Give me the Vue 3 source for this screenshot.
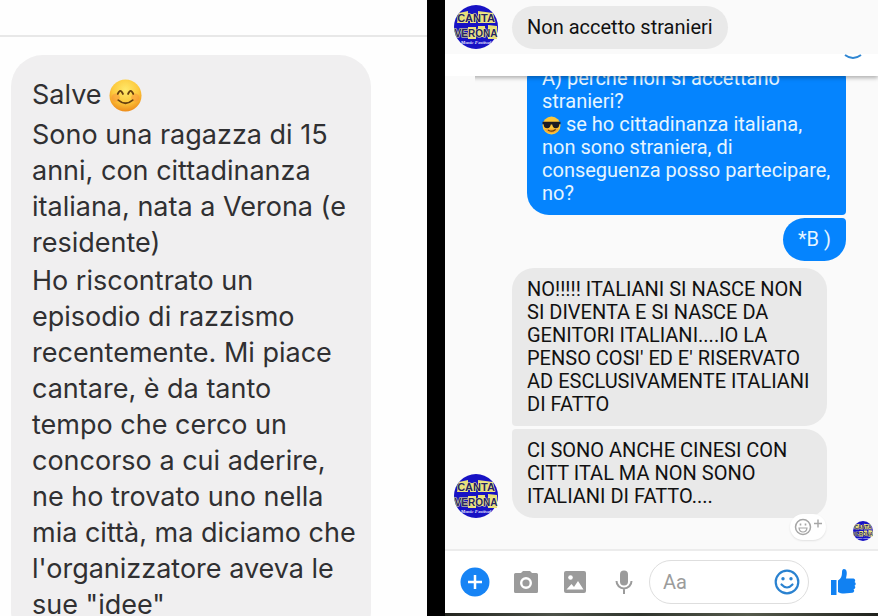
<script setup>
import { h } from 'vue'

const opening = 'Salve'
const story = [
  'Sono una ragazza di 15\nanni, con cittadinanza\nitaliana, nata a Verona (e\nresidente)',
  'Ho riscontrato un\nepisodio di razzismo\nrecentemente. Mi piace\ncantare, è da tanto\ntempo che cerco un\nconcorso a cui aderire,\nne ho trovato uno nella\nmia città, ma diciamo che\nl\'organizzatore aveva le\nsue "idee"',
]
const question = 'A) perché non si accettano\nstranieri?'
const argument = ' se ho cittadinanza italiana,\nnon sono straniera, di\nconseguenza posso partecipare,\nno?'
const replies = [
  "NO!!!!! ITALIANI SI NASCE NON\nSI DIVENTA E SI NASCE DA\nGENITORI ITALIANI....IO LA\nPENSO COSI' ED E' RISERVATO\nAD ESCLUSIVAMENTE ITALIANI\nDI FATTO",
  'CI SONO ANCHE CINESI CON\nCITT ITAL MA NON SONO\nITALIANI DI FATTO....',
]

const word = (text, y, size) =>
  h('text', {
    x: 22, y, 'text-anchor': 'middle', 'font-family': 'Liberation Sans, sans-serif',
    'font-weight': 700, 'font-size': size, fill: '#26235f', stroke: '#f4ef9a',
    'stroke-width': 1, 'paint-order': 'stroke',
  }, text)

const Logo = () =>
  h('svg', { viewBox: '0 0 44 44', 'aria-hidden': 'true' }, [
    h('circle', { cx: 22, cy: 22, r: 22, fill: '#1712c4' }),
    h('path', { d: 'M5 8l9-2v12H3zM16 9h6v9h-6zM24 6l15 2 2 10H24z', fill: '#e9e078' }),
    h('path', { d: 'M14 22h8v12h-8zM24 21h7v11h-7zM34 20l9 1v13h-9z', fill: '#e9e078' }),
    word('CANTA', 17, 11),
    word('VERONA', 32, 10),
    h('text', {
      x: 22, y: 39, 'text-anchor': 'middle', 'font-family': 'Liberation Serif, serif',
      'font-style': 'italic', 'font-weight': 700, 'font-size': 5, fill: '#e8e6ff',
    }, 'Music Festival'),
  ])
</script>

<template>
  <main class="page">
    <section class="story">
      <header class="story-bar"></header>
      <article class="story-bubble">
        <p class="greeting">
          {{ opening }}
          <svg class="blush" viewBox="0 0 32 32" role="img" aria-label="😊">
            <defs>
              <radialGradient id="blushFill" cx="50%" cy="32%" r="68%">
                <stop offset="0" stop-color="#ffe96b" />
                <stop offset="0.6" stop-color="#fdc93c" />
                <stop offset="1" stop-color="#ee8c1a" />
              </radialGradient>
            </defs>
            <circle cx="16" cy="16" r="15.5" fill="url(#blushFill)" />
            <circle cx="6.5" cy="18" r="4" fill="#f98a3a" opacity="0.45" />
            <circle cx="25.500" cy="18" r="4" fill="#f98a3a" opacity="0.45" />
            <path d="M8.500 14.500q2.500-6 5 0M18.500 14.500q2.500-6 5 0" fill="none" stroke="#67400f" stroke-width="1.800" stroke-linecap="round" />
            <path d="M9 20.500q7 6 14 0" fill="none" stroke="#67400f" stroke-width="1.700" stroke-linecap="round" />
          </svg>
        </p>
        <p v-for="part in story" :key="part">{{ part }}</p>
      </article>
    </section>

    <div class="divider"></div>

    <section class="phone">
      <div class="pinned">
        <Logo class="avatar" />
        <p class="bubble theirs round">Non accetto stranieri</p>
      </div>
      <div class="seam">
        <svg class="arc" viewBox="0 0 18 6" aria-hidden="true">
          <path d="M1 1q8 6 16 0" fill="none" stroke="#2f86d2" stroke-width="2" />
        </svg>
      </div>

      <div class="thread">
        <p class="bubble mine first">{{ question }}<br /><svg class="cool" viewBox="0 0 18 18" role="img" aria-label="😎">
            <circle cx="9" cy="9" r="8.500" fill="#fcc63a" />
            <path d="M2 12a8 8 0 0 0 14 0z" fill="#f19a2c" opacity="0.6" />
            <path d="M0.500 5.500h17v2l-1 .3c-.3 3-1.500 3.700-3.500 3.700s-3-1.500-3.300-3.500H8.300C8 10 7 11.500 5 11.500S1.800 10.800 1.500 7.800l-1-.3z" fill="#1d1b22" />
            <path d="M6 13.500q3.500 2 6.500-.5" fill="none" stroke="#6b3f10" stroke-width="1.200" stroke-linecap="round" />
          </svg>{{ argument }}</p>
        <p class="bubble mine last">*B )</p>
        <div class="received">
          <Logo class="avatar" />
          <div class="stack">
            <p v-for="reply in replies" :key="reply" class="bubble theirs">{{ reply }}</p>
          </div>
        </div>
        <div class="status">
          <button class="react" type="button" aria-label="Reazione">
            <svg viewBox="0 0 28 18" fill="none" stroke="#a6a6a6">
              <circle cx="9" cy="9" r="7.500" stroke-width="1.500" />
              <path d="M5 10h8q-.5 4-4 4t-4-4z" stroke-width="1.200" />
              <path d="M6.500 5.500v2M11.500 5.500v2" stroke-width="1.600" />
              <path d="M24 1.500v8M20 5.500h8" stroke-width="1.400" />
            </svg>
          </button>
          <Logo class="seen" />
        </div>
      </div>

      <form class="composer" @submit.prevent>
        <button type="button" aria-label="Altro">
          <svg class="plus" viewBox="0 0 30 30">
            <circle cx="15" cy="15" r="14.500" fill="#1784f5" />
            <path d="M15 8v14M8 15h14" stroke="#fff" stroke-width="2.500" />
          </svg>
        </button>
        <button type="button" aria-label="Fotocamera">
          <svg class="camera" viewBox="0 0 26 24">
            <path d="M8 3l2-2h7l2 2h4.500A1.500 1.500 0 0 1 25 4.500v17a1.500 1.500 0 0 1-1.500 1.500h-21A1.500 1.500 0 0 1 1 21.500v-17A1.500 1.500 0 0 1 2.500 3z" fill="#9b9b9b" />
            <circle cx="13" cy="13" r="4.800" fill="none" stroke="#fff" stroke-width="2.400" />
          </svg>
        </button>
        <button type="button" aria-label="Galleria">
          <svg class="gallery" viewBox="0 0 24 24">
            <rect x="1" y="1" width="22" height="22" rx="2" fill="#9b9b9b" />
            <circle cx="7.500" cy="7.500" r="2.300" fill="#fff" />
            <path d="M3.500 19.500l5-5.500 2.500 3 4-6 5.500 8.500z" fill="#fff" />
          </svg>
        </button>
        <button type="button" aria-label="Microfono">
          <svg class="mic" viewBox="0 0 18 24">
            <rect x="5" y="0.500" width="8" height="15" rx="4" fill="#9b9b9b" />
            <path d="M1.500 11a7.500 7.500 0 0 0 15 0M9 18.500V24" fill="none" stroke="#9b9b9b" stroke-width="2" />
          </svg>
        </button>
        <label class="field">
          <input type="text" placeholder="Aa" aria-label="Messaggio" />
          <svg class="smile" viewBox="0 0 26 26" fill="none" stroke="#2a82d0">
            <circle cx="13" cy="13" r="11.300" stroke-width="2.200" />
            <path d="M7.500 15.500q5.500 6 11 0" stroke-width="2.200" stroke-linecap="round" />
            <circle cx="9" cy="9.800" r="1.700" fill="#2a82d0" stroke="none" />
            <circle cx="17" cy="9.800" r="1.700" fill="#2a82d0" stroke="none" />
          </svg>
        </label>
        <button type="button" aria-label="Mi piace">
          <svg class="thumb" viewBox="0 0 26 28" fill="#1181f2">
            <path d="M1 12h5.500v15H1z" />
            <path d="M8 12.500c3-1.500 4-4.500 4-8 0-2 .5-3.500 2-3.500 2.500 0 3 3 2.700 5.500L16 10.500h7.500a2 2 0 0 1 1 3.500 2 2 0 0 1 0 3.700 2 2 0 0 1-1 3.600 2 2 0 0 1-1 3.500L14 25.500c-2.500 0-4-.5-6-1.500z" />
          </svg>
        </button>
      </form>
      <div class="edge"></div>
    </section>
  </main>
</template>

<style>
body {
  background: #fff;
}
</style>

<style scoped>
.page {
  display: grid;
  grid-template-columns: 427fr 18px 437fr;
  height: 100vh;
  overflow: hidden;
}

p {
  margin: 0;
  white-space: pre-line;
}

button {
  display: flex;
  padding: 0;
  border: 0;
  background: none;
}

svg {
  display: block;
  flex: none;
}

.story {
  min-width: 0;
  overflow: hidden;
  background: #fefefe;
  font-family: Inter, "Liberation Sans", sans-serif;
  font-size: 27px;
  line-height: 36px;
  color: #303032;
}

.story-bar {
  height: 35px;
  border-bottom: 2px solid #e8e8e8;
}

.story-bubble {
  display: flex;
  flex-direction: column;
  gap: 2px;
  margin: 18px 56px 0 11px;
  padding: 20px 0 20px 21px;
  border-radius: 32px;
  background: #f0eff0;
  white-space: nowrap;
}

.story-bubble p {
  white-space: pre;
}

.story-bubble .greeting {
  display: flex;
  align-items: center;
  gap: 7px;
  height: 40px;
  white-space: nowrap;
}

.blush {
  width: 33px;
  height: 33px;
}

.divider {
  background: #000;
}

.phone {
  display: flex;
  flex-direction: column;
  min-width: 0;
  min-height: 0;
  padding-right: 4px;
  background: #fff;
  font-family: Roboto, "Liberation Sans", sans-serif;
  font-size: 20px;
  line-height: 23px;
}

.pinned {
  display: flex;
  align-items: center;
  gap: 14px;
  height: 54px;
  padding-left: 9px;
  background: #fafafa;
}

.avatar {
  width: 44px;
  height: 44px;
}

.bubble {
  padding: 10px 15px;
}

.theirs {
  background: #e9e9e9;
  color: #111;
}

.round {
  border-radius: 22px;
}

.seam {
  position: relative;
  display: flex;
  justify-content: flex-end;
  height: 22px;
  padding-right: 16px;
  background: #fff;
  box-shadow: 0 2px 4px #0000004d;
  clip-path: inset(0 0 -8px 30px);
}

.arc {
  width: 18px;
  height: 6px;
}

.thread {
  display: flex;
  flex: 1;
  flex-direction: column;
  justify-content: flex-end;
  min-height: 0;
  overflow: hidden;
  background: #fafafa;
}

.thread > * {
  flex: none;
}

.mine {
  align-self: flex-end;
  margin-right: 32px;
  background: #0584fe;
  color: #e6f5ff;
}

.first {
  width: 289px;
  margin-bottom: 3px;
  border-radius: 22px 22px 4px 22px;
}

.last {
  margin-bottom: 7px;
  border-radius: 22px 4px 22px 22px;
}

.cool {
  display: inline-block;
  width: 19px;
  height: 19px;
  vertical-align: -4px;
}

.received {
  display: flex;
  align-items: flex-end;
  gap: 14px;
  padding-left: 9px;
}

.stack {
  display: flex;
  flex-direction: column;
  gap: 3px;
  width: 315px;
}

.stack .bubble:first-child {
  border-radius: 22px 22px 22px 4px;
}

.stack .bubble:last-child {
  border-radius: 4px 22px 22px 22px;
}

.status {
  display: flex;
  align-items: center;
  justify-content: flex-end;
  gap: 27px;
  height: 31px;
  padding-right: 5px;
}

.react {
  position: relative;
  align-self: flex-start;
  margin-top: -4px;
  padding: 4px;
  border-radius: 13px;
  background: #fff;
  box-shadow: 0 1px 2px #0000001a;
}

.react svg {
  width: 28px;
  height: 18px;
}

.seen {
  width: 20px;
  height: 20px;
  margin-top: -6px;
}

.composer {
  display: flex;
  align-items: center;
  height: 62px;
  padding: 0 22px 0 15px;
  border-top: 2px solid #ececec;
  background: #fff;
}

.plus {
  width: 30px;
  height: 30px;
  margin-right: 23px;
}

.camera {
  width: 26px;
  height: 24px;
  margin-right: 24px;
}

.gallery {
  width: 24px;
  height: 24px;
  margin-right: 28px;
}

.mic {
  width: 18px;
  height: 24px;
  margin-right: 16px;
}

.field {
  display: flex;
  flex: 1;
  align-items: center;
  min-width: 0;
  height: 42px;
  margin-right: 21px;
  padding: 0 8px 0 13px;
  border: 1px solid #dedede;
  border-radius: 22px;
}

.field input {
  flex: 1;
  min-width: 0;
  padding: 0;
  border: 0;
  outline: 0;
  background: none;
  font: inherit;
}

.field input::placeholder {
  color: #9c9c9c;
}

.smile {
  width: 26px;
  height: 26px;
}

.thumb {
  width: 26px;
  height: 28px;
}

.edge {
  height: 3px;
  background: linear-gradient(90deg, #23251f, #4c5148 25%, #30352d 45%, #555a4c 70%, #20221d);
}
</style>
